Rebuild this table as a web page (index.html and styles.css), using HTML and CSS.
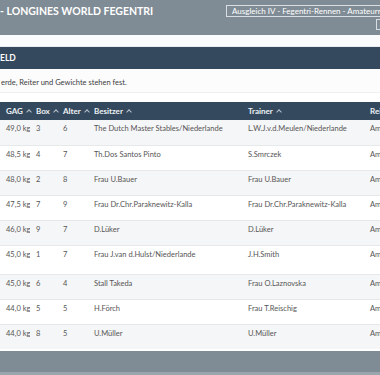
FILE: index.html
```html
<!DOCTYPE html>
<html lang="de">
<head>
  <meta charset="UTF-8" />
  <title>Starterfeld</title>
  <link rel="stylesheet" href="styles.css">
</head>
<body>
  <header class="race-head">
    <h1>- LONGINES WORLD FEGENTRI</h1>
    <div class="race-tags">
      <span class="tag">Ausgleich IV - Fegentri-Rennen - Amateurrennen</span>
      <span class="tag tag-small"></span>
    </div>
  </header>

  <div class="gap"></div>

  <section class="panel">
    <div class="panel-title">ELD</div>
    <p class="note">erde, Reiter und Gewichte stehen fest.</p>

    <table class="starters">
      <colgroup>
        <col class="c-gag"><col class="c-box"><col class="c-alter"><col class="c-owner"><col class="c-trainer"><col class="c-rider">
      </colgroup>
      <thead>
        <tr>
          <th>GAG <span class="caret"></span></th>
          <th>Box <span class="caret"></span></th>
          <th>Alter <span class="caret"></span></th>
          <th>Besitzer <span class="caret"></span></th>
          <th>Trainer <span class="caret"></span></th>
          <th>Reiter</th>
        </tr>
      </thead>
      <tbody>
        <tr><td>49,0 kg</td><td>3</td><td>6</td><td>The Dutch Master Stables/Niederlande</td><td>L.W.J.v.d.Meulen/Niederlande</td><td>Amateur</td></tr>
        <tr><td>48,5 kg</td><td>4</td><td>7</td><td>Th.Dos Santos Pinto</td><td>S.Smrczek</td><td>Amateur</td></tr>
        <tr><td>48,0 kg</td><td>2</td><td>8</td><td>Frau U.Bauer</td><td>Frau U.Bauer</td><td>Amateur</td></tr>
        <tr><td>47,5 kg</td><td>7</td><td>9</td><td>Frau Dr.Chr.Paraknewitz-Kalla</td><td>Frau Dr.Chr.Paraknewitz-Kalla</td><td>Amateur</td></tr>
        <tr><td>46,0 kg</td><td>9</td><td>7</td><td>D.Lüker</td><td>D.Lüker</td><td>Amateur</td></tr>
        <tr class="tall"><td>45,0 kg</td><td>1</td><td>7</td><td>Frau J.van d.Hulst/Niederlande</td><td>J.H.Smith</td><td>Amateur</td></tr>
        <tr><td>45,0 kg</td><td>6</td><td>4</td><td>Stall Takeda</td><td>Frau O.Laznovska</td><td>Amateur</td></tr>
        <tr><td>44,0 kg</td><td>5</td><td>5</td><td>H.Förch</td><td>Frau T.Reischig</td><td>Amateur</td></tr>
        <tr><td>44,0 kg</td><td>8</td><td>5</td><td>U.Müller</td><td>U.Müller</td><td>Amateur</td></tr>
      </tbody>
    </table>
  </section>

  <footer class="foot"></footer>
</body>
</html>
```

FILE: styles.css
```css
body {
  margin: 0;
  width: 380px;
  height: 375px;
  overflow: hidden;
  font-family: 'Lato', 'Liberation Sans', sans-serif;
  background: #ffffff;
  color: #4a4a4a;
}

.race-head {
  height: 35px;
  background: #808c95;
  display: flex;
  justify-content: space-between;
  color: white;
}

.race-head h1 {
  margin: 0;
  padding-top: 5px;
  font-size: 10.5px;
  font-weight: 700;
  line-height: 12px;
}

.race-tags {
  display: flex;
  flex-direction: column;
  align-items: flex-start;
  padding-top: 5px;
  width: 154px;
  overflow: hidden;
}

.tag {
  display: block;
  white-space: nowrap;
  border: 1px solid #d9dee2;
  font-size: 8px;
  font-weight: 400;
  line-height: 10px;
  padding: 0 5px;
}

.tag-small {
  align-self: flex-end;
  width: 8px;
  height: 9px;
  margin-top: 2px;
  margin-right: -6px;
  padding: 0;
}

.gap {
  height: 11px;
  background: #fafbfc;
  border-bottom: 1px solid #e8ecef;
}

.panel-title {
  height: 22px;
  line-height: 22px;
  background: #34495e;
  color: white;
  font-size: 8.5px;
  font-weight: 700;
}

.note {
  margin: 0;
  padding: 9px 0 0 1px;
  height: 14px;
  font-size: 7.5px;
  line-height: 9px;
  color: #3d3d3d;
  border-bottom: 1px solid #eef0f2;
  background: #fcfcfd;
}

.starters {
  margin-top: 9px;
  width: 450px;
  table-layout: fixed;
  border-collapse: collapse;
  font-size: 7.5px;
}

.c-gag { width: 30px; }
.c-box { width: 27px; }
.c-alter { width: 31px; }
.c-owner { width: 154px; }
.c-trainer { width: 122px; }
.c-rider { width: 86px; }

.starters th {
  background: #34495e;
  color: #eef2f5;
  font-weight: 700;
  font-size: 8px;
  text-align: left;
  height: 18px;
  padding: 0 0 0 6px;
  white-space: nowrap;
}

.caret {
  display: inline-block;
  width: 3px;
  height: 3px;
  border-left: 1px solid #b8c2cc;
  border-top: 1px solid #b8c2cc;
  transform: rotate(45deg);
  margin-left: 2px;
  vertical-align: 0;
}

.starters td {
  height: 25px;
  padding: 4px 0 0 6px;
  vertical-align: top;
  white-space: nowrap;
  overflow: hidden;
  color: #555;
  border-top: 1px solid #e6e8ea;
  box-sizing: border-box;
}

.starters tbody tr:nth-child(odd) td {
  background: #f5f6f7;
}

.starters tbody tr:first-child td {
  border-top: none;
}

.starters tr.tall td {
  height: 29px;
}

.foot {
  margin-top: 2px;
  height: 21px;
  background: #808c95;
  border-bottom: 3px solid #9aa5ad;
}
```
